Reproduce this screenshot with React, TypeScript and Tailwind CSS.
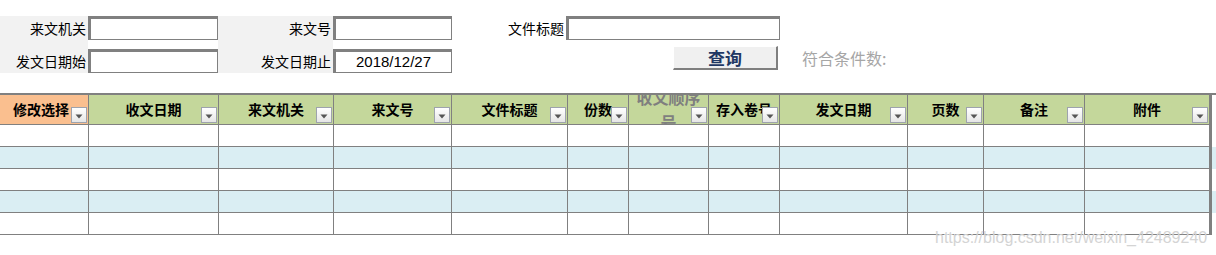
import React from "react";

type Col = { name: string; w: string; orange?: boolean; wrap?: boolean; last?: boolean };

const cols: Col[] = [
  { name: "修改选择", w: "w-[89px]", orange: true },
  { name: "收文日期", w: "w-[130px]" },
  { name: "来文机关", w: "w-[115px]" },
  { name: "来文号", w: "w-[118px]" },
  { name: "文件标题", w: "w-[116px]" },
  { name: "份数", w: "w-[61px]" },
  { name: "收文顺序号", w: "w-[80px]", wrap: true },
  { name: "存入卷号", w: "w-[71px]" },
  { name: "发文日期", w: "w-[128px]" },
  { name: "页数", w: "w-[76px]" },
  { name: "备注", w: "w-[101px]" },
  { name: "附件", w: "w-[127px]", last: true },
];

const rowColors = ["bg-white", "bg-[#daeef3]", "bg-white", "bg-[#daeef3]", "bg-white"];

const font = { fontFamily: '"Noto Sans CJK SC", "Liberation Sans", sans-serif' };

const FilterButton = () => (
  <div className="absolute right-[1px] bottom-[1px] z-10 flex h-4 w-4 items-center justify-center border border-[#9ea3ad] bg-gradient-to-b from-white to-[#e6e6e6]">
    <svg width="8" height="5" viewBox="0 0 8 5" className="mt-[2px]">
      <path d="M0.5 0.5 L7.5 0.5 L4 4.5 Z" fill="#555" />
    </svg>
  </div>
);

const Label = ({ text }: { text: string }) => (
  <div className="flex h-[24px] items-center justify-end pr-[2px] text-[14px] text-black">{text}</div>
);

const Input = ({ value }: { value?: string }) => (
  <div
    className="flex h-[24px] items-center justify-center border-t-[3px] border-l-[3px] border-r border-b border-[#808080] bg-white text-[15px] text-black"
    style={{ fontFamily: '"Liberation Sans", sans-serif' }}
  >
    {value}
  </div>
);

export default function App() {
  return (
    <div className="relative h-[255px] w-[1216px] overflow-hidden bg-white" style={font}>
      {/* search form */}
      <div className="flex items-start pt-[16px]">
        <div className="flex w-[88px] flex-col gap-[9px] bg-[#f2f2f2]">
          <Label text="来文机关" />
          <Label text="发文日期始" />
        </div>
        <div className="flex w-[130px] flex-col gap-[9px]">
          <Input />
          <Input />
        </div>
        <div className="flex w-[115px] flex-col gap-[9px] bg-[#f2f2f2]">
          <Label text="来文号" />
          <Label text="发文日期止" />
        </div>
        <div className="flex w-[119px] flex-col gap-[9px]">
          <Input />
          <Input value="2018/12/27" />
        </div>
        <div className="flex flex-col">
          <div className="flex">
            <div className="w-[114px]">
              <Label text="文件标题" />
            </div>
            <div className="w-[214px]">
              <Input />
            </div>
          </div>
          <div className="mt-[6px] flex items-center pl-[221px]">
            <button className="flex h-[24px] w-[105px] items-center justify-center border-t border-l border-white border-r-2 border-b-2 border-r-[#7f7f7f] border-b-[#7f7f7f] bg-[#f0f0f0] text-[17px] font-bold text-[#1f3864]">
              查询
            </button>
            <span className="ml-[24px] text-[16px] text-[#a6a6a6]">符合条件数:</span>
          </div>
        </div>
      </div>

      {/* table */}
      <div className="mt-[20px]">
        <div className="h-[2px] w-full bg-[#808080]" />
        <div className="flex h-[30px]">
          {cols.map((c) => (
            <div
              key={c.name}
              className={`relative flex h-full shrink-0 items-center justify-center overflow-hidden border-b border-[#808080] ${c.w} ${
                c.last ? "border-r-[3px]" : "border-r"
              } ${c.orange ? "bg-[#fabf8f] pr-[6px]" : "bg-[#c4d79b]"}`}
            >
              {c.wrap ? (
                <div className="text-center text-[16px] font-bold leading-[25px] text-[#7f7f7f]">
                  收文顺序
                  <br />号
                </div>
              ) : (
                <span className="text-[14px] font-bold text-black">{c.name}</span>
              )}
              <FilterButton />
            </div>
          ))}
        </div>
        {rowColors.map((bg, i) => (
          <div key={i} className={`flex h-[22px] ${bg}`}>
            {cols.map((c) => (
              <div
                key={c.name}
                className={`h-full shrink-0 border-b border-[#808080] ${c.w} ${c.last ? "border-r-[3px]" : "border-r"}`}
              />
            ))}
          </div>
        ))}
      </div>

      {/* watermark */}
      <div
        className="absolute left-[935px] top-[226px] text-[16px] text-[#d4d4d4]"
        style={{ fontFamily: '"Liberation Sans", sans-serif' }}
      >
        https://blog.csdn.net/weixin_42489240
      </div>
    </div>
  );
}
